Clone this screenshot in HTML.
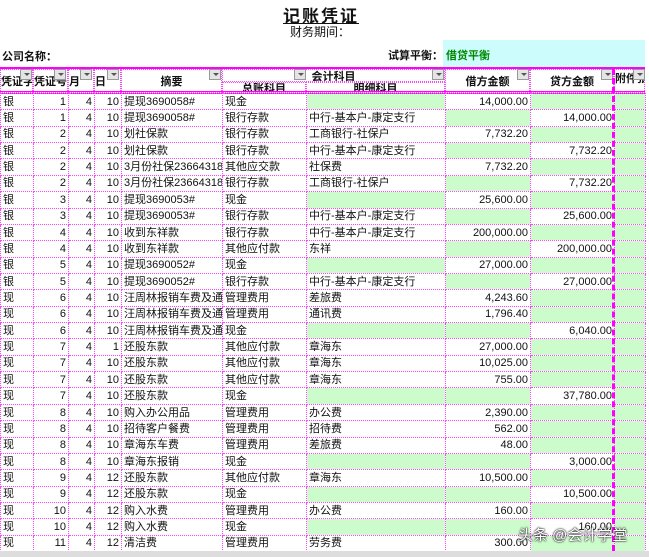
<!DOCTYPE html>
<html><head><meta charset="utf-8"><style>
*{margin:0;padding:0;box-sizing:border-box}
body{width:649px;height:557px;background:#fff;position:relative;overflow:hidden;font-family:"Liberation Sans","Noto Sans CJK SC",sans-serif;font-size:11px;color:#111}
.a{position:absolute;white-space:nowrap}
table{position:absolute;left:0;top:93px;border-collapse:collapse;table-layout:fixed;width:645px}
td{height:16.37px;border:1px dotted #f4f;padding:0 2px;overflow:hidden;white-space:nowrap;line-height:14px;font-size:11px}
td.r{text-align:right}
td.g{background:#ccfccc}
.hd{position:absolute;border:1px dotted #f4f;font-size:11px;font-weight:bold;display:flex;align-items:center;justify-content:center;white-space:nowrap;overflow:hidden}
.btn{position:absolute;width:12px;height:11px;background:#e4e4e4;border:1px solid #999;}
.btn:after{content:"";position:absolute;left:3px;top:3px;border-left:3px solid transparent;border-right:3px solid transparent;border-top:3px solid #555}
</style></head><body>
<div class="a" style="left:283px;top:2px;font-size:17px;font-weight:bold;text-decoration:underline;letter-spacing:2px">记账凭证</div>
<div class="a" style="left:290px;top:23px;font-size:12px">财务期间：</div>
<div class="a" style="left:2px;top:48px;font-weight:bold">公司名称：</div>
<div class="a" style="left:443px;top:40px;width:202px;height:28px;background:#ccfcfc"></div>
<div class="a" style="left:388px;top:47px;font-weight:bold">试算平衡：</div>
<div class="a" style="left:446px;top:47px;color:#080;font-weight:bold">借贷平衡</div>
<div class="a" style="left:0;top:67px;width:645px;height:2px;background:#f0f"></div>
<div class="hd" style="left:0;top:69px;width:33px;height:24px;justify-content:flex-start">凭证字</div>
<div class="hd" style="left:33px;top:69px;width:35px;height:24px;justify-content:flex-start">凭证号</div>
<div class="hd" style="left:68px;top:69px;width:26px;height:24px;justify-content:flex-start">月</div>
<div class="hd" style="left:94px;top:69px;width:27px;height:24px;justify-content:flex-start">日</div>
<div class="hd" style="left:121px;top:69px;width:101px;height:24px">摘要</div>
<div class="hd" style="left:222px;top:69px;width:223px;height:13px">会计科目</div>
<div class="hd" style="left:222px;top:82px;width:84px;height:11px">总账科目</div>
<div class="hd" style="left:306px;top:82px;width:139px;height:11px">明细科目</div>
<div class="hd" style="left:445px;top:69px;width:85px;height:24px">借方金额</div>
<div class="hd" style="left:530px;top:69px;width:84px;height:24px">贷方金额</div>
<div class="hd" style="left:614px;top:69px;width:31px;height:24px;justify-content:flex-start;align-items:flex-start">附件张数</div>
<div class="btn" style="left:20px;top:69px"></div>
<div class="btn" style="left:54px;top:69px"></div>
<div class="btn" style="left:80px;top:69px"></div>
<div class="btn" style="left:107px;top:69px"></div>
<div class="btn" style="left:209px;top:69px"></div>
<div class="btn" style="left:294px;top:69px"></div>
<div class="btn" style="left:432px;top:69px"></div>
<div class="btn" style="left:517px;top:69px"></div>
<div class="btn" style="left:601px;top:69px"></div>
<div class="btn" style="left:633px;top:69px"></div>
<div class="a" style="left:0;top:91px;width:645px;height:3px;border-top:1px solid #f0f;border-bottom:1px solid #f0f"></div>
<table>
<colgroup><col style="width:33px"><col style="width:35px"><col style="width:26px"><col style="width:27px"><col style="width:101px"><col style="width:84px"><col style="width:139px"><col style="width:85px"><col style="width:84px"><col style="width:31px"></colgroup>
<tr><td>银</td><td class="r">1</td><td class="r">4</td><td class="r">10</td><td>提现3690058#</td><td>现金</td><td class="g"></td><td class="r">14,000.00</td><td class="g"></td><td class="g"></td></tr>
<tr><td>银</td><td class="r">1</td><td class="r">4</td><td class="r">10</td><td>提现3690058#</td><td>银行存款</td><td>中行-基本户-康定支行</td><td class="g"></td><td class="r">14,000.00</td><td class="g"></td></tr>
<tr><td>银</td><td class="r">2</td><td class="r">4</td><td class="r">10</td><td>划社保款</td><td>银行存款</td><td>工商银行-社保户</td><td class="r">7,732.20</td><td class="g"></td><td class="g"></td></tr>
<tr><td>银</td><td class="r">2</td><td class="r">4</td><td class="r">10</td><td>划社保款</td><td>银行存款</td><td>中行-基本户-康定支行</td><td class="g"></td><td class="r">7,732.20</td><td class="g"></td></tr>
<tr><td>银</td><td class="r">2</td><td class="r">4</td><td class="r">10</td><td>3月份社保23664318#</td><td>其他应交款</td><td>社保费</td><td class="r">7,732.20</td><td class="g"></td><td class="g"></td></tr>
<tr><td>银</td><td class="r">2</td><td class="r">4</td><td class="r">10</td><td>3月份社保23664318#</td><td>银行存款</td><td>工商银行-社保户</td><td class="g"></td><td class="r">7,732.20</td><td class="g"></td></tr>
<tr><td>银</td><td class="r">3</td><td class="r">4</td><td class="r">10</td><td>提现3690053#</td><td>现金</td><td class="g"></td><td class="r">25,600.00</td><td class="g"></td><td class="g"></td></tr>
<tr><td>银</td><td class="r">3</td><td class="r">4</td><td class="r">10</td><td>提现3690053#</td><td>银行存款</td><td>中行-基本户-康定支行</td><td class="g"></td><td class="r">25,600.00</td><td class="g"></td></tr>
<tr><td>银</td><td class="r">4</td><td class="r">4</td><td class="r">10</td><td>收到东祥款</td><td>银行存款</td><td>中行-基本户-康定支行</td><td class="r">200,000.00</td><td class="g"></td><td class="g"></td></tr>
<tr><td>银</td><td class="r">4</td><td class="r">4</td><td class="r">10</td><td>收到东祥款</td><td>其他应付款</td><td>东祥</td><td class="g"></td><td class="r">200,000.00</td><td class="g"></td></tr>
<tr><td>银</td><td class="r">5</td><td class="r">4</td><td class="r">10</td><td>提现3690052#</td><td>现金</td><td class="g"></td><td class="r">27,000.00</td><td class="g"></td><td class="g"></td></tr>
<tr><td>银</td><td class="r">5</td><td class="r">4</td><td class="r">10</td><td>提现3690052#</td><td>银行存款</td><td>中行-基本户-康定支行</td><td class="g"></td><td class="r">27,000.00</td><td class="g"></td></tr>
<tr><td>现</td><td class="r">6</td><td class="r">4</td><td class="r">10</td><td>汪周林报销车费及通讯费</td><td>管理费用</td><td>差旅费</td><td class="r">4,243.60</td><td class="g"></td><td class="g"></td></tr>
<tr><td>现</td><td class="r">6</td><td class="r">4</td><td class="r">10</td><td>汪周林报销车费及通讯费</td><td>管理费用</td><td>通讯费</td><td class="r">1,796.40</td><td class="g"></td><td class="g"></td></tr>
<tr><td>现</td><td class="r">6</td><td class="r">4</td><td class="r">10</td><td>汪周林报销车费及通讯费</td><td>现金</td><td class="g"></td><td class="g"></td><td class="r">6,040.00</td><td class="g"></td></tr>
<tr><td>现</td><td class="r">7</td><td class="r">4</td><td class="r">1</td><td>还股东款</td><td>其他应付款</td><td>章海东</td><td class="r">27,000.00</td><td class="g"></td><td class="g"></td></tr>
<tr><td>现</td><td class="r">7</td><td class="r">4</td><td class="r">10</td><td>还股东款</td><td>其他应付款</td><td>章海东</td><td class="r">10,025.00</td><td class="g"></td><td class="g"></td></tr>
<tr><td>现</td><td class="r">7</td><td class="r">4</td><td class="r">10</td><td>还股东款</td><td>其他应付款</td><td>章海东</td><td class="r">755.00</td><td class="g"></td><td class="g"></td></tr>
<tr><td>现</td><td class="r">7</td><td class="r">4</td><td class="r">10</td><td>还股东款</td><td>现金</td><td class="g"></td><td class="g"></td><td class="r">37,780.00</td><td class="g"></td></tr>
<tr><td>现</td><td class="r">8</td><td class="r">4</td><td class="r">10</td><td>购入办公用品</td><td>管理费用</td><td>办公费</td><td class="r">2,390.00</td><td class="g"></td><td class="g"></td></tr>
<tr><td>现</td><td class="r">8</td><td class="r">4</td><td class="r">10</td><td>招待客户餐费</td><td>管理费用</td><td>招待费</td><td class="r">562.00</td><td class="g"></td><td class="g"></td></tr>
<tr><td>现</td><td class="r">8</td><td class="r">4</td><td class="r">10</td><td>章海东车费</td><td>管理费用</td><td>差旅费</td><td class="r">48.00</td><td class="g"></td><td class="g"></td></tr>
<tr><td>现</td><td class="r">8</td><td class="r">4</td><td class="r">10</td><td>章海东报销</td><td>现金</td><td class="g"></td><td class="g"></td><td class="r">3,000.00</td><td class="g"></td></tr>
<tr><td>现</td><td class="r">9</td><td class="r">4</td><td class="r">12</td><td>还股东款</td><td>其他应付款</td><td>章海东</td><td class="r">10,500.00</td><td class="g"></td><td class="g"></td></tr>
<tr><td>现</td><td class="r">9</td><td class="r">4</td><td class="r">12</td><td>还股东款</td><td>现金</td><td class="g"></td><td class="g"></td><td class="r">10,500.00</td><td class="g"></td></tr>
<tr><td>现</td><td class="r">10</td><td class="r">4</td><td class="r">12</td><td>购入水费</td><td>管理费用</td><td>办公费</td><td class="r">160.00</td><td class="g"></td><td class="g"></td></tr>
<tr><td>现</td><td class="r">10</td><td class="r">4</td><td class="r">12</td><td>购入水费</td><td>现金</td><td class="g"></td><td class="g"></td><td class="r">160.00</td><td class="g"></td></tr>
<tr><td>现</td><td class="r">11</td><td class="r">4</td><td class="r">12</td><td>清洁费</td><td>管理费用</td><td>劳务费</td><td class="r">300.00</td><td class="g"></td><td class="g"></td></tr>
</table>
<div class="a" style="left:612px;top:69px;width:0;height:482px;border-left:3px dashed #f0f"></div>
<div class="a" style="left:0;top:551px;width:649px;height:6px;background:#ddd"></div>
<div class="a" style="left:518px;top:524px;font-size:15px;color:#fff;text-shadow:0 0 2px #000,0 0 1px #000">头条 @会计学堂</div>
</body></html>
